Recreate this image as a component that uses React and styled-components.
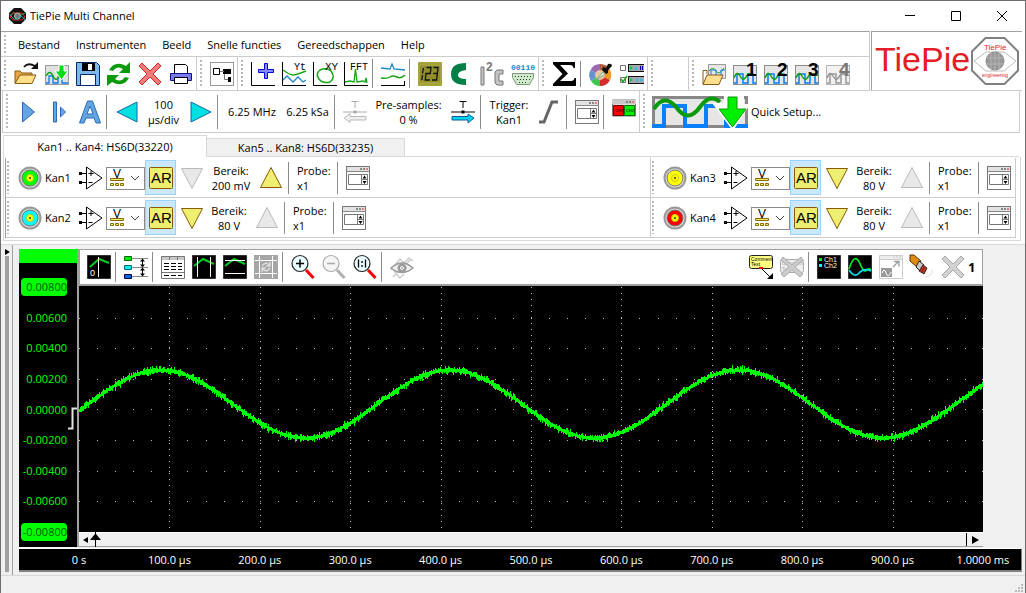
import React from "react";
import styled, { createGlobalStyle } from "styled-components";

const Global = createGlobalStyle`
  * { box-sizing: border-box; }
  body { margin: 0; background: #fff; }
  button, select { font: inherit; color: inherit; }
`;

const ui = `"Open Sans", "Noto Sans", sans-serif`;
const arial = `"Liberation Sans", Arial, sans-serif`;
const line = "#cccccc";
const mid = "#a0a0a0";

const Window = styled.div`
  min-height: 100vh;
  display: flex;
  flex-direction: column;
  border: 1px solid #6d6d6d;
  background: #fff;
  font-family: ${ui};
  font-size: 11px;
  line-height: 15px;
  color: #000;
`;

const TitleBar = styled.header`
  display: flex;
  align-items: center;
  height: 30px;
  padding-left: 8px;
`;
const Title = styled.h1`
  flex: 1;
  margin: 0 0 0 4px;
  padding-bottom: 2px;
  font-size: 11px;
  font-weight: 400;
`;
const WindowButton = styled.button`
  width: 46px;
  height: 30px;
  padding: 0;
  border: 0;
  background: none;
  display: flex;
  align-items: center;
  justify-content: center;
`;

const Header = styled.div`
  display: flex;
  padding-right: 3px;
`;
const HeaderMain = styled.div`
  flex: 1;
  min-width: 0;
  border-top: 1px solid ${mid};
  border-right: 1px solid ${line};
`;
const Logo = styled.div`
  display: flex;
  align-items: center;
  gap: 1px;
  width: 151px;
  padding-left: 3px;
  margin-left: 1px;
  border: solid ${mid};
  border-width: 1px 0 0 1px;
  border-bottom: 1px solid ${line};
  font: 34px/40px ${arial};
  color: #e31e24;
`;
const LogoName = styled.span`
  padding-bottom: 4px;
`;

const Row = styled.div`
  display: flex;
  align-items: stretch;
  height: ${(p) => p.$h}px;
  border-bottom: 1px solid ${line};
`;
const QuickRow = styled(Row)`
  margin: 0 5px 0 1px;
  border-left: 1px solid ${line};
  border-right: 1px solid ${line};
`;
const Band = styled.div`
  display: flex;
  align-items: center;
  padding-left: 3px;
  width: ${(p) => (p.$w ? p.$w + "px" : "auto")};
  border-right: ${(p) => (p.$last ? 0 : 1)}px solid ${line};
`;
const Grip = styled.span`
  flex: none;
  align-self: stretch;
  width: 3px;
  margin: 3px 3px 3px 0;
  background: repeating-linear-gradient(#b8b8b8 0 2px, transparent 2px 4px);
  border-right: 1px solid #fff;
`;
const Sep = styled.span`
  flex: none;
  width: 1px;
  height: ${(p) => p.$h || 30}px;
  margin: 0 4px 0 1px;
  background: #8c8c8c;
`;
const ToolButton = styled.button`
  flex: none;
  width: ${(p) => p.$w || 31}px;
  height: ${(p) => p.$h || 31}px;
  padding: 0;
  border: 1px solid ${(p) => (p.$on ? "#99d1ff" : "transparent")};
  background: ${(p) => (p.$on ? "#cce8ff" : "none")};
  display: flex;
  align-items: center;
  justify-content: center;
`;
const Svg = styled.svg`
  display: block;
  flex: none;
  overflow: visible;
`;
const Menu = styled.nav`
  display: flex;
  align-items: center;
  gap: 16px;
  padding-left: 8px;
`;
const MenuItem = styled.button`
  padding: 0;
  border: 0;
  background: none;
`;
const TextCell = styled.button`
  flex: none;
  width: ${(p) => p.$w}px;
  padding: 0 0 0 ${(p) => p.$indent || 0}px;
  border: 0;
  background: none;
  text-align: ${(p) => (p.$indent ? "left" : "center")};
  white-space: nowrap;
`;
const QuickSetup = styled.button`
  display: flex;
  align-items: center;
  gap: 3px;
  padding: 0 0 0 3px;
  border: 0;
  background: none;
`;

const Tabs = styled.div`
  display: flex;
  align-items: flex-end;
  height: 24px;
  margin: 0 6px 0 2px;
`;
const Tab = styled.button`
  width: ${(p) => (p.$on ? 204 : 198)}px;
  height: ${(p) => (p.$on ? 22 : 19)}px;
  padding: 0;
  border: 1px solid #d9d9d9;
  border-width: ${(p) => (p.$on ? "1px 1px 0 1px" : "1px 1px 1px 0")};
  background: ${(p) => (p.$on ? "#fff" : "#f0f0f0")};
`;
const TabLine = styled.span`
  flex: 1;
  border-bottom: 1px solid #d9d9d9;
`;
const TabPage = styled.section`
  margin: 0 4px 0 2px;
  padding: 1px 4px 2px 1px;
  border: solid #d9d9d9;
  border-width: 0 1px 1px 1px;
`;
const Channels = styled.div`
  display: grid;
  grid-template-columns: 1fr 365px;
  border-left: 1px solid ${mid};
`;
const Channel = styled.div`
  display: flex;
  align-items: center;
  height: 40px;
  padding-left: 1px;
  border-right: 1px solid ${line};
  border-bottom: 1px solid ${line};
`;
const ChannelName = styled.button`
  flex: none;
  display: flex;
  align-items: center;
  gap: 3px;
  width: 62px;
  padding: 0 0 0 5px;
  border: 0;
  background: none;
`;
const Coupling = styled.span`
  position: relative;
  flex: none;
  width: 39px;
  height: 23px;
  select {
    width: 39px;
    height: 23px;
    padding: 0 0 8px 6px;
    border: 1px solid #8a8a8a;
    border-radius: 0;
    background: #fff;
    appearance: none;
    font: 12px/13px ${arial};
  }
  svg {
    position: absolute;
    inset: 0;
    pointer-events: none;
  }
`;

const Work = styled.main`
  flex: 1;
  display: flex;
  margin-top: 3px;
  padding-right: 3px;
  border-top: 1px solid #d9d9d9;
  background: #f0f0f0;
`;
const Splitter = styled.div`
  flex: none;
  display: flex;
  flex-direction: column;
  width: 12px;
  margin-right: 6px;
  padding: 3px 0 3px 4px;
  border-right: 1px solid ${mid};
  &::after {
    content: "";
    flex: 1;
    width: 4px;
    background: ${mid};
  }
`;
const Graph = styled.div`
  flex: 1;
  min-width: 0;
  display: flex;
  flex-direction: column;
  padding: 4px 0 3px;
`;
const GraphTop = styled.div`
  flex: 1;
  display: flex;
  padding-right: 39px;
`;
const ValueAxis = styled.div`
  position: relative;
  flex: none;
  width: 60px;
  display: flex;
  flex-direction: column;
  background: #000;
  border-right: 2px solid ${mid};
`;
const ChannelBar = styled.div`
  height: 14px;
  margin-bottom: 15px;
  background: #0f0;
`;
const Values = styled.div`
  flex: 1;
  display: flex;
  flex-direction: column;
  justify-content: space-between;
  margin-bottom: 6px;
`;
const Value = styled.span`
  display: flex;
  justify-content: flex-end;
  width: 46px;
  height: 18px;
  margin-left: 2px;
  line-height: 18px;
  border-radius: 4px;
  white-space: nowrap;
  color: ${(p) => (p.$end ? "#005a00" : "#0f0")};
  background: ${(p) => (p.$end ? "#0f0" : "none")};
`;
const TriggerMark = styled.svg`
  position: absolute;
  right: 0;
  top: 53%;
`;
const PlotColumn = styled.div`
  flex: 1;
  min-width: 0;
  display: flex;
  flex-direction: column;
  background: #000;
`;
const PlotTools = styled.div`
  display: flex;
  align-items: center;
  height: 37px;
  padding: 0 0 0 3px;
  margin-bottom: 1px;
  background: #fff;
  border: solid ${mid};
  border-width: 1px 1px 2px 1px;
`;
const Spacer = styled.span`
  flex: 1;
`;
const Count = styled.span`
  width: 14px;
  font-size: 13px;
  font-weight: 700;
`;
const Plot = styled.svg`
  display: block;
  flex: 1;
  width: 100%;
  min-height: 245px;
`;
const Scroll = styled.div`
  position: relative;
  display: flex;
  height: 15px;
  border-top: 1px solid #fff;
  border-bottom: 1px solid ${mid};
  background: #f0f0f0;
`;
const ScrollEnd = styled.button`
  width: ${(p) => (p.$right ? 17 : 16)}px;
  padding: 0;
  border: 0;
  border-left: ${(p) => (p.$right ? 1 : 0)}px solid #000;
  background: none;
  display: flex;
  align-items: center;
  justify-content: ${(p) => (p.$right ? "center" : "flex-start")};
`;
const Marker = styled.svg`
  position: absolute;
  left: 11px;
  top: -1px;
`;
const TimeAxis = styled.div`
  display: flex;
  justify-content: space-between;
  align-items: center;
  height: 24px;
  margin-top: 1px;
  padding: 0 38px 0 60px;
  background: #000;
  border: solid #fff;
  border-width: 1px 0 0 0;
  border-bottom: 2px solid #808080;
  border-right: 1px solid #808080;
  color: #fff;
`;
const Time = styled.span`
  width: 0;
  display: flex;
  justify-content: center;
  white-space: nowrap;
`;
const Status = styled.footer`
  display: flex;
  justify-content: flex-end;
  align-items: flex-end;
  height: 19px;
  padding: 2px;
  border-top: 1px solid #d7d7d7;
  background: #f0f0f0;
`;

const Pic = ({ children, w = 24, h = 24 }) => (
  <Svg width={w} height={h} viewBox={`0 0 ${w} ${h}`} fill="none" aria-hidden="true">
    {children}
  </Svg>
);
const Tool = ({ label, children, w, ...rest }) => (
  <ToolButton aria-label={label} title={label} $w={w} {...rest}>
    <Pic>{children}</Pic>
  </ToolButton>
);

const Axes = () => <path d="M.5 0V23.500H24" stroke="#000" />;
const Glyph = ({ x, y, size = 10, bold, fill = "#000", mono, children }) => (
  <text x={x} y={y} fontSize={size} fontWeight={bold ? 700 : 400} fill={fill}
    fontFamily={mono ? "Liberation Mono, monospace" : "Liberation Sans, Arial, sans-serif"}>
    {children}
  </text>
);

const AppIcon = () => (
  <Pic w={17} h={16}>
    <path d="M5 0h7l5 5v6l-5 5H5l-5-5V5z" fill="#111" />
    <path d="M1 8q3-5 6-2t9-1" stroke="#0c3" />
    <path d="M1 9l3-4h9l3 4-3 3H4z" stroke="#d22" />
    <circle cx="8.500" cy="8" r="3" fill="#777" stroke="#bbb" />
    <path d="M1 6q4 8 8 4t7 2" stroke="#1aa" />
  </Pic>
);
const OpenIcon = () => (
  <>
    <path d="M1 21V9h5l2 2h10v3" fill="#e6a544" stroke="#8a5a14" />
    <path d="M1 21.500l5-8.500h16l-4 8.500z" fill="#ffe08a" stroke="#8a5a14" />
    <path d="M10 5q4-5 11-1" stroke="#111" strokeWidth="1.800" />
    <path d="M24 0v7h-7z" fill="#111" />
  </>
);
const WaveBox = ({ off }) => (
  <>
    <rect x=".5" y="3.500" width="23" height="19" fill={off ? "#f2f2f2" : "#e6e6e6"} stroke={off ? "#b5b5b5" : "#8c8c8c"} />
    <path d="M1 21h3v-9h6v9h5v-9h5v9h3" stroke={off ? "#999" : "#0a7cf0"} strokeWidth="1.500" />
    <path d="M1 16q3-8 6-2t6 1 5-3 5 1" stroke={off ? "#999" : "#11a011"} strokeWidth="1.500" />
  </>
);
const QuickWave = () => (
  <>
    <rect x=".5" y="3.500" width="23" height="19" fill="#e0e0e0" stroke="#999" />
    <path d="M1 21h3v-7h4v7h5v-6h4v6h6" stroke="#0a7cf0" strokeWidth="1.300" />
    <path d="M1 14q4-7 7 0t7-1" stroke="#11a011" strokeWidth="1.500" />
    <path d="M14 3h5v6h4l-6.500 9L10 9h4z" fill="#0d1" stroke="#fff" />
  </>
);
const SaveIcon = () => (
  <>
    <path d="M.5.500h20l3 3v20H.5z" fill="#7db8ee" stroke="#002a6a" />
    <path d="M6 1h13v8H6z" fill="#000" />
    <path d="M12 2h4v6h-4z" fill="#fff" />
    <path d="M4.500 12.500h15v11h-15z" fill="#fff" stroke="#002a6a" />
  </>
);
const RefreshIcon = () => (
  <g fill="#0a9a0a">
    <path d="M2 8Q8-2 19 4l4-4v11H12l4-4Q10 3 6 9z" />
    <path d="M22 16Q16 26 5 20l-5 4V13h12l-4 4q6 4 10-2z" />
  </g>
);
const CrossIcon = ({ off }) => (
  <path d="M4 1l8 8 8-8 3 3-8 8 8 8-3 3-8-8-8 8-3-3 8-8-8-8z" fill={off ? "#d2d2d2" : "#f47c7c"} stroke={off ? "#a8a8a8" : "#e02424"} />
);
const PrintIcon = () => (
  <>
    <path d="M5.500 2.500h11l2 2v8h-13z" fill="#fff" stroke="#000" />
    <path d="M1.500 11.500h21v7h-21z" fill="#7a7aee" stroke="#10108a" />
    <path d="M5.500 15.500h13v6h-13z" fill="#fff" stroke="#000" />
  </>
);
const TreeIcon = () => (
  <>
    <rect x=".5" y=".5" width="23" height="23" stroke="#999" />
    <path d="M3.500 6.500h6v6h-6z" stroke="#000" />
    <path d="M13 7h8v5h-8zM18 15h3v5h-3z" fill="#000" />
    <path d="M10 9.500h4M14.500 12v5.500H18" stroke="#777" />
  </>
);
const PlusGraph = () => (
  <>
    <Axes />
    <path d="M13.500 1.500h3v6h6v3h-6v6h-3v-6h-6v-3h6z" fill="#8a8aff" stroke="#0000e0" />
  </>
);
const YtIcon = () => (
  <>
    <Axes />
    <path d="M1 8q7 5 10 5t13-4" stroke="#13a813" strokeWidth="1.500" />
    <path d="M1 18l4-4 6 6 5-5 5 5 3-2" stroke="#1b86c8" strokeWidth="1.300" />
    <Glyph x={12} y={8} size={10} mono>Yt</Glyph>
  </>
);
const XyIcon = () => (
  <>
    <Axes />
    <path d="M7 8q7-3 11 1 5 7-1 11-7 2-11-3-4-5 1-9z" stroke="#13a813" strokeWidth="1.500" />
    <Glyph x={12} y={8} size={11} mono>XY</Glyph>
  </>
);
const FftIcon = () => (
  <>
    <Axes />
    <path d="M1 20l5-1 4 1 1.500-13L13 20l6-1 2 1 1-4 1 5" stroke="#13a813" strokeWidth="1.300" />
    <Glyph x={6} y={8} size={10} mono>FFT</Glyph>
  </>
);
const TrendIcon = () => (
  <>
    <path d="M0 23.500h24" stroke="#000" />
    <path d="M0 6l9 1 2-5 2 5 11 1" stroke="#1b86c8" strokeWidth="1.300" />
    <path d="M0 16q6 1 9-1t7 0 8-2" stroke="#13a813" strokeWidth="1.500" />
    <path d="M23.500 19v5" stroke="#000" />
  </>
);
const MeterIcon = () => (
  <>
    <rect x="0" y="0" width="24" height="24" rx="1" fill="#a5a33c" />
    <rect x="2" y="4" width="20" height="16" fill="#918f2c" />
    <path d="M5.500 6l-1 5.500m0 1.500l-.7 5M8.500 5.500h4.500l-.7 6H8l-.7 6.500H12M15.500 5.500H20l-.7 6h-4m4 0l-.7 6.500H14" stroke="#111" strokeWidth="1.300" />
  </>
);
const CIcon = () => <path d="M17 1v7q-8 1-8 5t8 4v6Q2 23 2 12T17 1z" fill="#007f46" />;
const I2cIcon = () => (
  <>
    <path d="M1 5h3v18H1z" fill="#c4c4c4" stroke="#777" />
    <path d="M23 8v4h-4v7h4v4h-6l-2-2V10l2-2z" fill="#c4c4c4" stroke="#777" />
    <Glyph x={6} y={9} size={12} bold fill="#777">2</Glyph>
  </>
);
const SerialIcon = () => (
  <>
    <Glyph x={0} y={8} size={8} mono bold fill="#1787cc">00110</Glyph>
    <path d="M1.500 11.500h21v4l-4 7h-13l-4-7z" fill="#cfeacb" stroke="#7d967a" />
    <path d="M4 14.500h17M6 17.500h13M8 20.500h9" stroke="#333" strokeDasharray="1 2" />
  </>
);
const SigmaIcon = () => <path d="M1 0h22v6h-1.500Q21 3 18 3H8l8 8.500L8 19h11q3 0 3.500-3H24v8H1v-2l9.500-10L1 2z" fill="#000" />;
const ColorIcon = () => (
  <>
    <path d="M11 13V2A11 11 0 0 0 1.500 8z" fill="#9a6ab0" />
    <path d="M11 13V2A11 11 0 0 1 21 8z" fill="#b05a40" />
    <path d="M11 13L1.500 8A11 11 0 0 0 2 19z" fill="#6292d8" />
    <path d="M11 13L21 8A11 11 0 0 1 21 18z" fill="#f09a20" />
    <path d="M11 13L2 19A11 11 0 0 0 11 24z" fill="#35c84a" />
    <path d="M11 13L21 18A11 11 0 0 1 11 24z" fill="#d62c2c" />
    <circle cx="11" cy="13" r="5" fill="#e9c6a0" />
    <path d="M6 19l8-9 2 2z" fill="#dff5df" stroke="#7a7" />
    <path d="M14 5l3 1 2-4q4-1 4 2l-4 4v3l-2 1-4-4z" fill="#111" />
  </>
);
const ChecksIcon = () => (
  <>
    <path d="M.5 3.500h5v5h-5zM.5 15.500h5v5h-5z" fill="#fff" stroke="#777" />
    <path d="M1 17l2 3 4-6" stroke="#13a813" strokeWidth="1.500" />
    <path d="M8 2h16v8H8zM8 14h16v8H8z" fill="#a8a8a8" />
    <path d="M24 2.500H8.500V10M24 14.500H8.500V22M8 9.500h16M8 21.500h16" stroke="#111" />
    <path d="M10 4l3 2-3 2zM10 16l3 2-3 2z" fill="#0c4" />
    <path d="M14 8l2-4 2 4zM18 16l-3 2 3 2zM20 16l3 2-3 2z" fill="#3cb4ee" />
    <path d="M20.500 4v4M22.500 4v4" stroke="#00a" />
  </>
);
const FolderWave = () => (
  <>
    <path d="M6.500 2.500h17v14h-17z" fill="#e6e6e6" stroke="#999" />
    <path d="M7 9q4-5 7 0t8-3" stroke="#11a011" />
    <path d="M9 14V8h5v6h5V8h4" stroke="#0a7cf0" />
    <path d="M1 22V8.500h4V12" stroke="#8a5a14" />
    <path d="M1 22.500l4-9.500h16l-4 9.500z" fill="#ffdf90" stroke="#8a5a14" />
  </>
);
const NumberedWave = ({ n }) => (
  <>
    <WaveBox off={n === 4} />
    <Glyph x={13} y={14} size={19} bold fill={n === 4 ? "#777" : "#000"}>{n}</Glyph>
  </>
);

const blue = { fill: "#62a5e0", stroke: "#2a6db5" };
const PlayIcon = () => <path d="M6.500 2v20l12-10z" {...blue} />;
const StepIcon = () => <path d="M6.500 2v20h3V2zM13.500 7v10l5-5z" {...blue} />;
const AutoIcon = () => <path d="M9.500 1h5L22.500 23h-4.500l-2-5H8l-2 5H1.500zM12 6l-3 8h6z" fillRule="evenodd" {...blue} />;
const LeftIcon = () => <path d="M22 2L2 12l20 10z" fill="#00e0e0" stroke="#1464a8" />;
const RightIcon = () => <path d="M2 2l20 10L2 22z" fill="#00e0e0" stroke="#1464a8" />;
const TrigShift = ({ off }) => {
  const c = off ? "#aaa" : "#000";
  return (
    <>
      <path d="M8.500 1.500h7M12 1v7M0 12h24" stroke={c} />
      <path d="M10.500 10.500h3v3h-3z" fill={c} />
      {off
        ? <path d="M23 16.500v3.500H7v2.500l-6-4.500 6-4.500v3z" fill="#eee" stroke="#bbb" />
        : <path d="M1 16.500v3.500h16v3l6-5-6-4v2.500z" fill="#00d4ee" stroke="#145a9a" />}
    </>
  );
};
const SlopeIcon = () => <path d="M2 22h5L15 2h6" stroke="#666" strokeWidth="3" />;
const PanelIcon = () => (
  <>
    <rect x=".5" y=".5" width="23" height="23" fill="#fff" stroke="#777" />
    <path d="M1 1h22v4H1z" fill="#e2e2e2" />
    <path d="M0 5.500h24" stroke="#888" />
    <path d="M14 2h2v2h-2zM17 2h2v2h-2z" fill="#888" />
    <path d="M20 2h2v2h-2z" fill="#e77" />
    <path d="M2.500 8.500h19v10h-19zM15.500 8v11M15 13.500h7" stroke="#777" />
    <path d="M16.500 12.500l2-3 2 3zM16.500 15l2 3 2-3z" fill="#000" />
  </>
);
const ChannelsIcon = () => (
  <>
    <path d="M.5 0v16h23V0z" fill="#ddd" stroke="#777" />
    <path d="M0 0h24v4H0z" fill="#c8c8c8" />
    <path d="M14 1h2v2h-2zM17 1h2v2h-2z" fill="#888" />
    <path d="M20 1h2v2h-2z" fill="#e77" />
    <path d="M1.500 5.500h10v10h-10z" fill="#f00" stroke="#700" />
    <path d="M12.500 5.500h10v10h-10z" fill="#0e0" stroke="#070" />
    <Glyph x={3} y={12} size={4}>CH1</Glyph>
    <Glyph x={14} y={12} size={4}>CH2</Glyph>
  </>
);
const QuickSetupArt = () => (
  <Pic w={96} h={32}>
    <path d="M1.500 1.500h93v29h-93z" fill="#e6e6e6" stroke="#888" strokeWidth="3" />
    <path d="M0 30h12V10h21v20h21V10h20v20h22" stroke="#0a80ff" strokeWidth="4" />
    <path d="M2 13Q12-3 24 11q12 17 24 0Q58-3 68 6" stroke="#0a9a0a" strokeWidth="4" />
    <path d="M60 7h12V0h20v8h6L81 35z" fill="#fff" />
    <path d="M76 1h9v12h9L80.500 31 67 13h9z" fill="#0e0" stroke="#0a9a0a" />
  </Pic>
);

const Jack = ({ color }) => (
  <Pic>
    <circle cx="12" cy="12" r="10.500" fill="#ddd" stroke="#999" strokeWidth="2" />
    <circle cx="12" cy="12" r="8" fill={color} stroke="#777" />
    <circle cx="12" cy="12" r="3.500" fill="#ff0" stroke="#cc0" />
    <circle cx="12" cy="12" r="1" fill="#333" />
  </Pic>
);
const AmpIcon = () => (
  <>
    <path d="M7.500 1v22L23 12zM1 7.500h6M1 16.500h6M9.500 7.500h5M12 5v5M9.500 16.500h4" stroke="#000" />
    <path d="M0 6h3v3H0zM0 15h3v3H0z" fill="#000" />
  </>
);
const ArIcon = () => (
  <>
    <rect x=".5" y="1.500" width="23" height="21" rx="1" fill="#eeee70" stroke="#8a5a00" />
    <Glyph x={2} y={17} size={15}>AR</Glyph>
  </>
);
const RangeTri = ({ up, off }) => (
  <path d={up ? "M12 1.500L22.500 21.500h-21z" : "M1.500 2.500h21L12 22.500z"} fill={off ? "#e8e8e8" : "#eeee70"} stroke={off ? "#bbb" : "#8a5a00"} />
);

const BlackTile = () => <path d="M.5.500h23v23H.5z" fill="#000" stroke="#333" />;
const Cursor0 = () => (
  <>
    <BlackTile />
    <path d="M3 12L12 4l10 4" stroke="#0c2" strokeWidth="2" />
    <path d="M11.500 2v20" stroke="#fff" />
    <Glyph x={3} y={21} size={9} fill="#fff">0</Glyph>
  </>
);
const Arrange = () => (
  <>
    <path d="M8 3.500h16M8 12.500h16M8 21.500h16" stroke="#888" />
    <path d="M.5 1.500h7v4h-7z" fill="#0e0" stroke="#060" />
    <path d="M.5 10.500h7v4h-7z" fill="#0ee" stroke="#067" />
    <path d="M.5 19.500h7v4h-7z" fill="#06d" stroke="#004" />
    <path d="M18.500 4v8M18.500 13v8" stroke="#000" />
    <path d="M16 6.500l2.500-3 2.500 3zM16 9.500l2.500 3 2.500-3zM16 15.500l2.500-3 2.500 3zM16 18.500l2.500 3 2.500-3z" fill="#000" />
  </>
);
const TableIcon = () => (
  <>
    <path d="M.5 1.500h23v22H.5z" fill="#fff" stroke="#777" />
    <path d="M1 2h22v3H1z" fill="#c8c8c8" />
    <path d="M8.500 2v3M16.500 2v3M0 17.500h24" stroke="#777" />
    <path d="M3 8.500h18M3 11.500h18M3 14.500h18M3 20.500h18" stroke="#000" strokeDasharray="5 2" />
  </>
);
const VCursors = () => (
  <>
    <BlackTile />
    <path d="M2 11l9-7 11 5" stroke="#0c2" strokeWidth="2" />
    <path d="M5.500 2v20M18.500 2v20" stroke="#fff" />
  </>
);
const HCursors = () => (
  <>
    <BlackTile />
    <path d="M2 11l9-7 11 5" stroke="#0c2" strokeWidth="2" />
    <path d="M2 5.500h20M2 18.500h20" stroke="#fff" />
  </>
);
const BoxCursors = () => (
  <>
    <path d="M0 0h24v24H0z" fill="#a6a6a6" />
    <path d="M5.500 1v22M18.500 1v22M1 5.500h22M1 18.500h22" stroke="#fff" />
    <path d="M8 11q4-5 7-1M16 13q-4 5-7 1M16 7v4h-4M8 17v-4h4" stroke="#ddd" strokeWidth="1.500" />
  </>
);
const ZoomIcon = ({ kind }) => {
  const off = kind === "out";
  return (
    <>
      <path d="M15 15l7.500 8" stroke={off ? "#b0b0b0" : "#f00"} strokeWidth="3" />
      <circle cx="9" cy="8.500" r="8" fill={off ? "#f5f5f5" : "#e8fbff"} stroke={off ? "#aaa" : "#222"} strokeWidth="1.200" />
      {kind === "in" && <path d="M5 8.500h8M9 4.500v8" stroke="#000" strokeWidth="1.500" />}
      {off && <path d="M5 8.500h8" stroke="#aaa" strokeWidth="1.500" />}
      {kind === "one" && <path d="M5.500 4.500v8M12.500 4.500v8M9 6v2M9 10v2" stroke="#000" strokeWidth="1.300" />}
    </>
  );
};
const EyeIcon = () => (
  <>
    <path d="M1 15L10 4l4 4 5-5 4 3M3 22L21 4M4 16l6 7 4-4" stroke="#ccc" strokeWidth="1.500" />
    <path d="M1 13q11-10 22 0-11 9-22 0z" fill="#eee" stroke="#999" strokeWidth="1.500" />
    <circle cx="12" cy="13" r="4.500" fill="#999" />
    <circle cx="12" cy="13" r="1.500" stroke="#fff" />
  </>
);
const CommentIcon = ({ off }) => (
  <>
    <rect x=".5" y={off ? 4.5 : 0.5} width="23" height="13" rx="2" fill={off ? "#eee" : "#ffff80"} stroke={off ? "#aaa" : "#222"} />
    <Glyph x={2} y={off ? 10 : 6} size={5} fill={off ? "#aaa" : "#000"}>Comment</Glyph>
    <Glyph x={2} y={off ? 16 : 11} size={5} fill={off ? "#aaa" : "#000"}>Text</Glyph>
    {off ? (
      <path d="M3 2l9 8 9-8 2 3-8 7 8 7-3 3-8-7-8 7-3-3 8-7-8-7z" fill="#ccc" stroke="#aaa" />
    ) : (
      <>
        <path d="M10 13h4" stroke="#f00" strokeWidth="2" />
        <path d="M13 14l8 8" stroke="#000" />
        <path d="M24 18v6h-6z" fill="#000" />
      </>
    )}
  </>
);
const LegendIcon = () => (
  <>
    <BlackTile />
    <path d="M2 3h3v3H2z" fill="#0f0" />
    <path d="M2 9h3v3H2z" fill="#0ff" />
    <Glyph x={7} y={7} size={7} fill="#fff">Ch1</Glyph>
    <Glyph x={7} y={13} size={7} fill="#fff">Ch2</Glyph>
  </>
);
const TwoWaves = () => (
  <>
    <BlackTile />
    <path d="M1 14Q7-5 13 11q3 7 6 4 2-2 4 0" stroke="#0e2" strokeWidth="1.700" />
    <path d="M1 15q6 9 11 2 5-4 11-1" stroke="#0de" strokeWidth="1.700" />
  </>
);
const PopOut = () => (
  <>
    <path d="M.5.500h23v23H.5z" fill="#fff" stroke="#ccc" />
    <path d="M1 1h22v3H1z" fill="#ececec" />
    <path d="M14 2h2M17 2h2M20 2h2M0 4.500h24" stroke="#ccc" />
    <path d="M2 13h11v9H2z" fill="#999" />
    <path d="M3 18q2-6 4 0t5-1" stroke="#fff" />
    <path d="M14 12l5-5M15 6.500h5v5" stroke="#999" strokeWidth="1.300" />
  </>
);
const Eraser = () => (
  <>
    <path d="M0 0h4l7 6-4 6L0 6z" fill="#e08a10" stroke="#5a3400" />
    <path d="M9 6l5 4-4 6-4-4z" fill="#c8c8c8" stroke="#222" />
    <path d="M13 10l4 3-3 6-5-3z" fill="#b02a1c" stroke="#333" />
    <path d="M22 15q2 5-7 7" stroke="#ddd" />
  </>
);

const LogoMark = () => (
  <Pic w={48} h={48}>
    <path d="M14.500 1h19L47 14.500v19L33.500 47h-19L1 33.500v-19z" fill="#fff" stroke="#808080" strokeWidth="2" />
    <path d="M3 24l12-9h18l12 9-12 10H15z" stroke="#bbb" />
    <circle cx="24" cy="24" r="9" fill="#999" stroke="#888" />
    <path d="M15 21h18M15 27h18M20 16v16M24 15v18M28 16v16" stroke="#b4b4b4" />
    <Glyph x={13} y={13} size={8} fill="#e31e24">TiePie</Glyph>
    <Glyph x={11} y={40} size={5} fill="#e31e24">engineering</Glyph>
  </Pic>
);

const menus = ["Bestand", "Instrumenten", "Beeld", "Snelle functies", "Gereedschappen", "Help"];

const channelData = [
  { name: "Kan1", color: "#00ff00", range: "200 mV", down: false, up: true, w: 48 },
  { name: "Kan3", color: "#ffff00", range: "80 V", down: true, up: false, w: 44 },
  { name: "Kan2", color: "#00ffff", range: "80 V", down: true, up: false, w: 44 },
  { name: "Kan4", color: "#ff0000", range: "80 V", down: true, up: false, w: 44 },
];

function ChannelRow({ c }) {
  return (
    <Channel>
      <Grip />
      <ChannelName><Jack color={c.color} />{c.name}</ChannelName>
      <Tool label="Ingang"><AmpIcon /></Tool>
      <Coupling>
        <select aria-label={`Koppeling ${c.name}`} defaultValue="V"><option>V</option></select>
        <svg width="39" height="23" fill="none" aria-hidden="true">
          <path d="M4.500 12.500h13v2h-13zM4.500 17.500h3v2h-3zM9.500 17.500h3v2h-3zM14.500 17.500h3v2h-3z" fill="#ee6" stroke="#8a6a00" />
          <path d="M25 10l4 4 4-4" stroke="#444" />
        </svg>
      </Coupling>
      <Tool label="Auto range" aria-pressed="true" $on $h={35}><ArIcon /></Tool>
      <Tool label="Bereik omlaag"><RangeTri off={!c.down} /></Tool>
      <TextCell $w={c.w}>Bereik:<br />{c.range}</TextCell>
      <Tool label="Bereik omhoog" w={32}><RangeTri up off={!c.up} /></Tool>
      <Sep $h={32} />
      <TextCell $w={43} $indent={4}>Probe:<br />x1</TextCell>
      <Sep $h={32} />
      <Tool label={`Instellingen ${c.name}`}><PanelIcon /></Tool>
    </Channel>
  );
}

const values = ["0.00800", "0.00600", "0.00400", "0.00200", "0.00000", "-0.00200", "-0.00400", "-0.00600", "-0.00800"];
const times = ["0 s", "100.0 µs", "200.0 µs", "300.0 µs", "400.0 µs", "500.0 µs", "600.0 µs", "700.0 µs", "800.0 µs", "900.0 µs", "1.0000 ms"];

// Sine with a little seeded noise, one vertical stroke per sample column.
function tracePath() {
  let seed = 7;
  const rnd = () => {
    seed = (seed * 16807) % 2147483647;
    return seed / 2147483647;
  };
  let d = "";
  for (let x = 0; x < 904; x++) {
    const y = 117 - 34 * Math.sin((2 * Math.PI * (x - 9)) / 289);
    const a = y - 1.5 - rnd() * rnd() * 4;
    const b = y + 1.5 + rnd() * rnd() * 4;
    d += `M${x + 0.5} ${a.toFixed(1)}V${b.toFixed(1)}`;
  }
  return d;
}
function gridPath() {
  let d = "";
  for (let k = 1; k < 10; k++) {
    for (let y = 0; y < 245; y += 6) d += `M${Math.round(k * 90.4)} ${y}h1v1h-1z`;
  }
  for (let r = 1; r < 8; r++) {
    for (let i = 0; i <= 50; i++) d += `M${Math.min(903, Math.round(i * 18.08))} ${Math.round(r * 30.6)}h1v1h-1z`;
  }
  return d;
}
const trace = tracePath();
const grid = gridPath();

export default function App() {
  return (
    <Window>
      <Global />
      <TitleBar>
        <AppIcon />
        <Title>TiePie Multi Channel</Title>
        <WindowButton aria-label="Minimaliseren"><Pic w={10} h={10}><path d="M0 4.500h10" stroke="#000" /></Pic></WindowButton>
        <WindowButton aria-label="Maximaliseren"><Pic w={10} h={10}><path d="M.5.500h9v9h-9z" stroke="#000" /></Pic></WindowButton>
        <WindowButton aria-label="Sluiten"><Pic w={10} h={10}><path d="M0 0l10 10M10 0L0 10" stroke="#000" /></Pic></WindowButton>
      </TitleBar>

      <Header>
        <HeaderMain>
          <Row $h={25}>
            <Band $last>
              <Grip />
              <Menu>{menus.map((m) => <MenuItem key={m}>{m}</MenuItem>)}</Menu>
            </Band>
          </Row>
          <Row $h={34}>
            <Band>
              <Grip />
              <Tool label="Openen"><OpenIcon /></Tool>
              <Tool label="Quick setup"><QuickWave /></Tool>
              <Tool label="Opslaan"><SaveIcon /></Tool>
              <Tool label="Vernieuwen"><RefreshIcon /></Tool>
              <Tool label="Verwijderen"><CrossIcon /></Tool>
              <Tool label="Afdrukken"><PrintIcon /></Tool>
            </Band>
            <Band><Grip /><Tool label="Objecten"><TreeIcon /></Tool></Band>
            <Band>
              <Grip />
              <Tool label="Nieuwe grafiek"><PlusGraph /></Tool>
              <Tool label="Yt"><YtIcon /></Tool>
              <Tool label="XY"><XyIcon /></Tool>
              <Tool label="FFT"><FftIcon /></Tool>
              <Sep $h={29} />
              <Tool label="Trend"><TrendIcon /></Tool>
              <Sep $h={29} />
              <Tool label="Meter"><MeterIcon /></Tool>
              <Tool label="CAN"><CIcon /></Tool>
              <Tool label="I2C"><I2cIcon /></Tool>
              <Tool label="Serieel"><SerialIcon /></Tool>
            </Band>
            <Band>
              <Grip />
              <Tool label="Som"><SigmaIcon /></Tool>
              <Sep $h={26} />
              <Tool label="Kleuren"><ColorIcon /></Tool>
              <Tool label="Werkbalken"><ChecksIcon /></Tool>
            </Band>
            <Band $w={41}><Grip /></Band>
            <Band $last>
              <Grip />
              <Tool label="Instellingen openen"><FolderWave /></Tool>
              {[1, 2, 3, 4].map((n) => <Tool key={n} label={`Instelling ${n}`}><NumberedWave n={n} /></Tool>)}
            </Band>
          </Row>
        </HeaderMain>
        <Logo><LogoName>TiePie</LogoName><LogoMark /></Logo>
      </Header>

      <QuickRow $h={42}>
        <Band>
          <Grip />
          <Tool label="Start"><PlayIcon /></Tool>
          <Tool label="Eenmalig"><StepIcon /></Tool>
          <Tool label="Auto"><AutoIcon /></Tool>
          <Sep $h={34} />
          <Tool label="Tijdbasis omlaag"><LeftIcon /></Tool>
          <TextCell $w={43}>100<br />µs/div</TextCell>
          <Tool label="Tijdbasis omhoog"><RightIcon /></Tool>
          <Sep $h={34} />
          <TextCell $w={60}>6.25 MHz</TextCell>
          <TextCell $w={51}>6.25 kSa</TextCell>
          <Sep $h={34} />
          <Tool label="Pre-samples omlaag"><TrigShift off /></Tool>
          <TextCell $w={77}>Pre-samples:<br />0 %</TextCell>
          <Tool label="Pre-samples omhoog" w={32}><TrigShift /></Tool>
          <Sep $h={34} />
          <TextCell $w={48}>Trigger:<br />Kan1</TextCell>
          <Tool label="Flank" w={32}><SlopeIcon /></Tool>
          <Sep $h={34} />
          <Tool label="Triggerinstellingen"><PanelIcon /></Tool>
          <Sep $h={34} />
          <Tool label="Kanalen"><ChannelsIcon /></Tool>
        </Band>
        <Band $last>
          <Grip />
          <QuickSetup><QuickSetupArt />Quick Setup...</QuickSetup>
        </Band>
      </QuickRow>

      <Tabs role="tablist">
        <Tab role="tab" aria-selected="true" $on>Kan1 .. Kan4: HS6D(33220)</Tab>
        <Tab role="tab" aria-selected="false">Kan5 .. Kan8: HS6D(33235)</Tab>
        <TabLine />
      </Tabs>
      <TabPage>
        <Channels>{channelData.map((c) => <ChannelRow key={c.name} c={c} />)}</Channels>
      </TabPage>

      <Work>
        <Splitter>
          <Pic w={6} h={8}><path d="M0 1l5 3-5 3z" fill="#000" /></Pic>
        </Splitter>
        <Graph>
          <GraphTop>
            <ValueAxis>
              <ChannelBar />
              <Values>
                {values.map((v, i) => <Value key={v} $end={i === 0 || i === 8}>{v}</Value>)}
              </Values>
              <TriggerMark width="9" height="23" fill="none" aria-hidden="true">
                <path d="M0 21.500h4.500v-20H9" stroke="#dfe8df" strokeWidth="2" />
              </TriggerMark>
            </ValueAxis>
            <PlotColumn>
              <PlotTools>
                <Tool label="Nulcursor"><Cursor0 /></Tool>
                <Sep />
                <Tool label="Assen verdelen"><Arrange /></Tool>
                <Sep />
                <Tool label="Cursortabel"><TableIcon /></Tool>
                <Tool label="Verticale cursors"><VCursors /></Tool>
                <Tool label="Horizontale cursors"><HCursors /></Tool>
                <Tool label="Cursors herstellen"><BoxCursors /></Tool>
                <Sep />
                <Tool label="Inzoomen"><ZoomIcon kind="in" /></Tool>
                <Tool label="Uitzoomen"><ZoomIcon kind="out" /></Tool>
                <Tool label="Zoom 1:1"><ZoomIcon kind="one" /></Tool>
                <Sep />
                <Tool label="Referentie tonen"><EyeIcon /></Tool>
                <Spacer />
                <Tool label="Commentaar"><CommentIcon /></Tool>
                <Tool label="Commentaar wissen"><CommentIcon off /></Tool>
                <Sep />
                <Tool label="Legenda"><LegendIcon /></Tool>
                <Tool label="Signalen"><TwoWaves /></Tool>
                <Tool label="Los venster"><PopOut /></Tool>
                <Tool label="Wissen"><Eraser /></Tool>
                <Tool label="Sluiten"><CrossIcon off /></Tool>
                <Count>1</Count>
              </PlotTools>
              <Plot viewBox="0 0 904 245" preserveAspectRatio="none" role="img" aria-label="Kan1">
                <path d={grid} fill="#c0c0c0" shapeRendering="crispEdges" />
                <path d={trace} stroke="#0f0" shapeRendering="crispEdges" />
              </Plot>
              <Scroll>
                <ScrollEnd aria-label="Naar links"><Pic w={10} h={8}><path d="M9 1L4 4l5 3z" fill="#000" /></Pic></ScrollEnd>
                <Spacer />
                <ScrollEnd $right aria-label="Naar rechts"><Pic w={8} h={8}><path d="M1 0l7 4-7 4z" fill="#000" /></Pic></ScrollEnd>
                <Marker width="11" height="15" aria-hidden="true"><path d="M5 0h1v2l5 6H6v7H5V8H0l5-6z" fill="#000" /></Marker>
              </Scroll>
            </PlotColumn>
          </GraphTop>
          <TimeAxis>{times.map((t) => <Time key={t}>{t}</Time>)}</TimeAxis>
        </Graph>
      </Work>
      <Status>
        <Pic w={8} h={8}>
          <path d="M6 0h2v2H6zM3 3h2v2H3zM6 3h2v2H6zM0 6h2v2H0zM3 6h2v2H3zM6 6h2v2H6z" fill="#bbb" />
        </Pic>
      </Status>
    </Window>
  );
}
